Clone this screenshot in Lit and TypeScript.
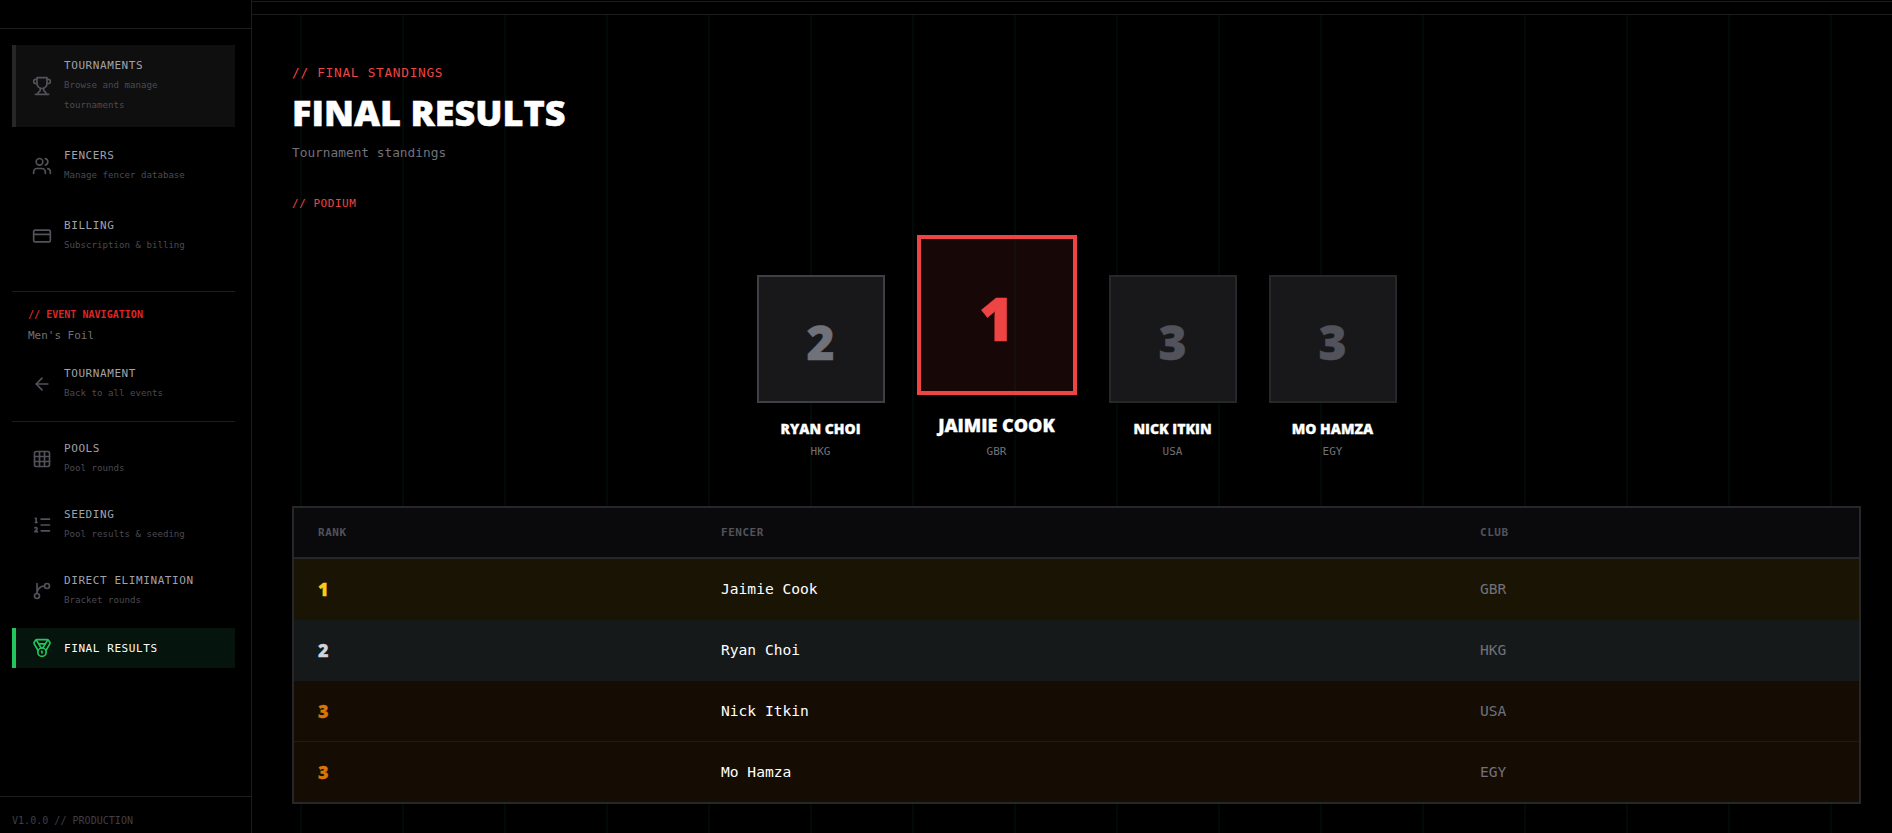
import { LitElement, html, css, svg } from "lit";
import { customElement } from "lit/decorators.js";

const ICONS: Record<string, unknown> = {
  trophy: svg`<path d="M6 9H4.5a2.5 2.5 0 0 1 0-5H6"/><path d="M18 9h1.5a2.5 2.5 0 0 0 0-5H18"/><path d="M4 22h16"/><path d="M10 14.66V17c0 .55-.47.98-.97 1.21C7.85 18.75 7 20.24 7 22"/><path d="M14 14.66V17c0 .55.47.98.97 1.21C16.15 18.75 17 20.24 17 22"/><path d="M18 2H6v7a6 6 0 0 0 12 0V2Z"/>`,
  users: svg`<path d="M16 21v-2a4 4 0 0 0-4-4H6a4 4 0 0 0-4 4v2"/><circle cx="9" cy="7" r="4"/><path d="M22 21v-2a4 4 0 0 0-3-3.87"/><path d="M16 3.13a4 4 0 0 1 0 7.75"/>`,
  card: svg`<rect width="20" height="14" x="2" y="5" rx="2"/><line x1="2" x2="22" y1="10" y2="10"/>`,
  arrow: svg`<path d="m12 19-7-7 7-7"/><path d="M19 12H5"/>`,
  grid: svg`<rect width="18" height="18" x="3" y="3" rx="2"/><path d="M3 9h18"/><path d="M3 15h18"/><path d="M9 3v18"/><path d="M15 3v18"/>`,
  list: svg`<path d="M11 5h10"/><path d="M11 12h10"/><path d="M11 19h10"/><path d="M4 4h1v5"/><path d="M4 9h2"/><path d="M6.5 20H3.4c0-1 2.6-1.925 2.6-3.5a1.5 1.5 0 0 0-2.6-1.02"/>`,
  branch: svg`<path d="M15 6a9 9 0 0 0-9 9V3"/><circle cx="18" cy="6" r="3"/><circle cx="6" cy="18" r="3"/>`,
  medal: svg`<path d="M7.21 15 2.66 7.14a2 2 0 0 1 .13-2.2L4.4 2.8A2 2 0 0 1 6 2h12a2 2 0 0 1 1.6.8l1.6 2.14a2 2 0 0 1 .14 2.2L16.79 15"/><path d="M11 12 5.12 2.2"/><path d="m13 12 5.88-9.8"/><path d="M8 7h8"/><circle cx="12" cy="17" r="5"/><path d="M12 18v-2h-.5"/>`,
};

const icon = (n: string) => html`<svg class="icon" viewBox="0 0 24 24" fill="none" stroke="currentColor" stroke-width="2" stroke-linecap="round" stroke-linejoin="round">${ICONS[n]}</svg>`;

const item = (i: string, title: string, desc: string[], cls = "") => html`
  <a class="item ${cls}">
    ${icon(i)}
    <span class="item-text">
      <span class="item-title">${title}</span>
      ${desc.length ? html`<span class="item-desc">${desc.map((d) => html`<span class="dl">${d}</span>`)}</span>` : ""}
    </span>
  </a>`;

const PODIUM = [
  { r: 2, name: "RYAN CHOI", code: "HKG", cls: "second" },
  { r: 1, name: "JAIMIE COOK", code: "GBR", cls: "first" },
  { r: 3, name: "NICK ITKIN", code: "USA", cls: "third" },
  { r: 3, name: "MO HAMZA", code: "EGY", cls: "third" },
];
const ROWS = [
  { r: 1, name: "Jaimie Cook", code: "GBR", cls: "gold" },
  { r: 2, name: "Ryan Choi", code: "HKG", cls: "silver" },
  { r: 3, name: "Nick Itkin", code: "USA", cls: "bronze" },
  { r: 3, name: "Mo Hamza", code: "EGY", cls: "bronze" },
];

@customElement("app-root")
export class AppRoot extends LitElement {
  static styles = css`
    :host {
      display: flex;
      width: 100%;
      height: 100vh;
      overflow: hidden;
      background: #000;
      font-family: "DejaVu Sans Mono", monospace;
    }
    .side {
      width: 252px;
      flex: none;
      box-sizing: border-box;
      border-right: 1px solid #1c1c1f;
      display: flex;
      flex-direction: column;
    }
    .side-top { height: 28px; border-bottom: 1px solid #1c1c1f; flex: none; }
    .nav { flex: 1; padding: 16px 16px 0 12px; display: flex; flex-direction: column; }
    .group { display: flex; flex-direction: column; }
    .gap8 { gap: 8px; }
    .gap4 { gap: 4px; }
    .item {
      display: flex;
      align-items: center;
      gap: 12px;
      padding: 12px 16px;
      border-left: 4px solid transparent;
    }
    .icon { width: 20px; height: 20px; flex: none; color: #52525b; }
    .item-text { display: flex; flex-direction: column; }
    .item-title {
      padding-top: 1px;
      font-size: 11px;
      line-height: 16px;
      letter-spacing: 0.58px;
      color: #a1a1aa;
    }
    .item-desc {
      margin-top: 1px;
      font-size: 9.13px;
      line-height: 20px;
      color: #4a4a52;
      display: flex;
      flex-direction: column;
    }
    .item.active { background: #0f0f10; border-left-color: #27272a; }
    .item.current { background: #05140c; border-left-color: #22c55e; height: 40px; box-sizing: border-box; }
    .item.current .icon { color: #22c55e; }
    .item.current .item-title { color: #fff; font-weight: 500; }
    .rule { height: 1px; background: #1c1c1f; flex: none; }
    .rule.a { margin-top: 24px; }
    .rule.b { margin-top: 6px; margin-bottom: 6px; }
    .evt { padding: 16px 16px 0; height: 45px; display: flex; flex-direction: column; }
    .evt-label { font-size: 10.05px; line-height: 14px; font-weight: 700; color: #dc2626; }
    .evt-name { margin-top: 6px; font-size: 10.97px; line-height: 16px; color: #71717a; }
    .last { margin-top: 6px; }
    .foot {
      height: 37px;
      box-sizing: border-box;
      flex: none;
      border-top: 1px solid #1c1c1f;
      padding: 17px 12px 0;
      font-size: 10.05px;
      line-height: 14px;
      color: #3f3f46;
    }
    .main { flex: 1; min-width: 0; display: flex; flex-direction: column; }
    .bar {
      flex: none;
      margin-top: 1px;
      height: 12px;
      border-top: 1px solid #1c1c1f;
      border-bottom: 1px solid #1c1c1f;
    }
    .content {
      flex: 1;
      min-height: 0;
      padding: 50px 31px 0 40px;
      background-image: linear-gradient(90deg, #010a06 0, #010a06 2px, transparent 2px);
      background-size: 102px 100%;
      background-position: 48px 0;
    }
    .kicker { font-size: 12.8px; line-height: 16px; letter-spacing: 0.7px; color: #ef4444; }
    h1 {
      margin: 12px 0 0;
      font-family: "Open Sans", sans-serif;
      font-weight: 800;
      font-size: 36px;
      line-height: 40px;
      color: #fff;
      -webkit-text-stroke: 0.5px currentColor;
    }
    .sub { margin-top: 10px; font-size: 12.8px; line-height: 20px; color: #71717a; }
    .pod-label { margin-top: 33px; font-size: 10.97px; line-height: 16px; letter-spacing: 0.55px; color: #ef4444; }
    .podium {
      margin-top: 23px;
      display: flex;
      justify-content: center;
      align-items: flex-end;
      gap: 32px;
    }
    .p { display: flex; flex-direction: column; align-items: center; }
    .box {
      width: 128px;
      height: 128px;
      box-sizing: border-box;
      padding-top: 4px;
      display: flex;
      align-items: center;
      justify-content: center;
      font-family: "Open Sans", sans-serif;
      font-weight: 800;
      font-size: 48px;
      background: #18181b;
      border: 2px solid #27272a;
      color: #52525b;
      -webkit-text-stroke: 0.5px currentColor;
    }
    .second .box { border-color: #3f3f46; color: #71717a; }
    .first .box {
      width: 160px;
      height: 160px;
      padding-top: 6px;
      border: 4px solid #ef4444;
      background: rgba(239, 68, 68, 0.1);
      color: #ef4444;
      font-size: 60px;
    }
    .p-name {
      margin-top: 16px;
      font-family: "Open Sans", sans-serif;
      font-weight: 800;
      font-size: 14px;
      line-height: 20px;
      color: #fff;
      -webkit-text-stroke: 0.3px currentColor;
    }
    .first .p-name { font-size: 18px; line-height: 28px; }
    .p-code { margin-top: 5px; font-size: 11px; line-height: 16px; color: #71717a; }
    .table {
      margin-top: 46px;
      border: 2px solid #27272a;
      background: #000;
    }
    .tr { display: grid; grid-template-columns: 403fr 759fr 403fr; align-items: center; }
    .tr > * { padding-left: 24px; }
    .head {
      height: 49px;
      background: #0a0a0c;
      border-bottom: 2px solid #27272a;
      font-size: 10.97px;
      font-weight: 700;
      letter-spacing: 0.55px;
      color: #52525b;
    }
    .row { height: 60px; border-bottom: 1px solid transparent; }
    .row:last-child { border-bottom: 0; }
    .row.gold { background: #1a1405; }
    .row.silver { background: #161919; }
    .row.bronze { background: #150d04; }
    .row.bronze:not(:last-child) { border-bottom-color: #1c1c1f; }
    .rank { font-family: "Open Sans", sans-serif; font-weight: 800; font-size: 18px; -webkit-text-stroke: 0.3px currentColor; }
    .gold .rank { color: #facc15; }
    .silver .rank { color: #d1d5db; }
    .bronze .rank { color: #d97706; }
    .name { font-size: 14.6px; color: #fff; padding-bottom: 2px; }
    .code { font-size: 14.6px; color: #71717a; padding-bottom: 2px; }
  `;

  render() {
    return html`
      <aside class="side">
        <div class="side-top"></div>
        <nav class="nav">
          <div class="group gap8">
            ${item("trophy", "TOURNAMENTS", ["Browse and manage", "tournaments"], "active")}
            ${item("users", "FENCERS", ["Manage fencer database"])}
            ${item("card", "BILLING", ["Subscription & billing"])}
          </div>
          <div class="rule a"></div>
          <div class="evt">
            <span class="evt-label">// EVENT NAVIGATION</span>
            <span class="evt-name">Men's Foil</span>
          </div>
          ${item("arrow", "TOURNAMENT", ["Back to all events"])}
          <div class="rule b"></div>
          <div class="group gap4">
            ${item("grid", "POOLS", ["Pool rounds"])}
            ${item("list", "SEEDING", ["Pool results & seeding"])}
            ${item("branch", "DIRECT ELIMINATION", ["Bracket rounds"])}
          </div>
          <div class="last">${item("medal", "FINAL RESULTS", [], "current")}</div>
        </nav>
        <div class="foot">V1.0.0 // PRODUCTION</div>
      </aside>
      <main class="main">
        <div class="bar"></div>
        <div class="content">
          <div class="kicker">// FINAL STANDINGS</div>
          <h1>FINAL RESULTS</h1>
          <div class="sub">Tournament standings</div>
          <div class="pod-label">// PODIUM</div>
          <div class="podium">
            ${PODIUM.map((p) => html`
              <div class="p ${p.cls}">
                <div class="box">${p.r}</div>
                <div class="p-name">${p.name}</div>
                <div class="p-code">${p.code}</div>
              </div>`)}
          </div>
          <div class="table">
            <div class="tr head"><span>RANK</span><span>FENCER</span><span>CLUB</span></div>
            ${ROWS.map((r) => html`
              <div class="tr row ${r.cls}">
                <span class="rank">${r.r}</span>
                <span class="name">${r.name}</span>
                <span class="code">${r.code}</span>
              </div>`)}
          </div>
        </div>
      </main>
    `;
  }
}
